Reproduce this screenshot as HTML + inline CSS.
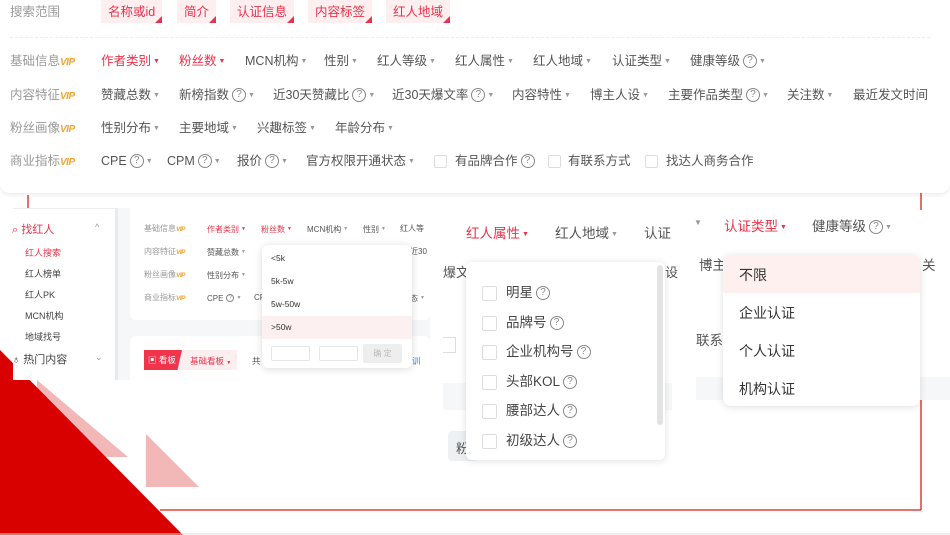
<!DOCTYPE html>
<html><head><meta charset="utf-8">
<style>
*{margin:0;padding:0;box-sizing:border-box}
body{width:950px;height:535px;overflow:hidden;background:#fff;font-family:"Liberation Sans","Noto Sans CJK SC",sans-serif;position:relative;color:#555}
.a{position:absolute;white-space:nowrap}
.t{font-size:12.5px;color:#555;line-height:20px}
.g{color:#999}
.r{color:#e8334a}
.v{font-style:italic;font-weight:bold;font-size:10px;color:#f3a532;letter-spacing:-.5px}
.tag{position:absolute;top:0;height:23px;background:#fdeef0;color:#e8334a;font-size:12.5px;line-height:24px;padding:0 7px}
.tag:after{content:"";position:absolute;right:0;bottom:0;border-left:7px solid transparent;border-bottom:7px solid #e8334a}
.ar{font-size:7px;color:#999;vertical-align:2px;margin-left:2px}
.r .ar{color:#e8334a}
.q{display:inline-block;width:14px;height:14px;border:1px solid #888;border-radius:50%;font-size:10px;line-height:12px;text-align:center;color:#888;margin-left:3px;vertical-align:top;margin-top:3px}
.cb{position:absolute;width:13px;height:13px;border:1px solid #ddd;border-radius:2px;background:#fff}
.s{font-size:8px;line-height:12px}
.s .ar{font-size:5px}
.s .v{font-size:6.5px}
.s .q{width:8px;height:8px;font-size:6px;line-height:7px;margin-top:2px}
</style></head><body>
<svg class="a" style="left:0;top:0" width="950" height="535">
<polygon points="37,380 128,457 37,457" fill="#f2b8b8"/>
<polygon points="146,434 199,487 146,487" fill="#f2b8b8"/>
<polygon points="0,350 183,535 0,535" fill="#d90000"/>
<line x1="921" y1="192" x2="921" y2="510" stroke="#d81f1f" stroke-width="1.3"/>
<line x1="160" y1="510" x2="921" y2="510" stroke="#d81f1f" stroke-width="1.3"/>
<line x1="28" y1="195" x2="28" y2="208" stroke="#d81f1f" stroke-width="1.3"/>
<line x1="0" y1="534" x2="950" y2="534" stroke="#ddd"/>
</svg>

<div class="a" style="left:0;top:0;width:950px;height:193px;background:#fff;border-radius:0 0 10px 10px;box-shadow:0 2px 4px rgba(0,0,0,.08)"></div>
<div class="a t g" style="left:10px;top:2px">搜索范围</div>
<div class="tag" style="left:101px">名称或id</div>
<div class="tag" style="left:177px">简介</div>
<div class="tag" style="left:230px">认证信息</div>
<div class="tag" style="left:308px">内容标签</div>
<div class="tag" style="left:386px">红人地域</div>
<div class="a" style="left:10px;top:37px;width:920px;border-top:1px dashed #eee"></div>

<div class="a t g" style="left:10px;top:51px">基础信息<span class="v">VIP</span></div>
<div class="a t r" style="left:101px;top:51px">作者类别<span class="ar">▼</span></div>
<div class="a t r" style="left:179px;top:51px">粉丝数<span class="ar">▼</span></div>
<div class="a t" style="left:245px;top:51px">MCN机构<span class="ar">▼</span></div>
<div class="a t" style="left:324px;top:51px">性别<span class="ar">▼</span></div>
<div class="a t" style="left:377px;top:51px">红人等级<span class="ar">▼</span></div>
<div class="a t" style="left:455px;top:51px">红人属性<span class="ar">▼</span></div>
<div class="a t" style="left:533px;top:51px">红人地域<span class="ar">▼</span></div>
<div class="a t" style="left:612px;top:51px">认证类型<span class="ar">▼</span></div>
<div class="a t" style="left:690px;top:51px">健康等级<span class="q">?</span><span class="ar">▼</span></div>

<div class="a t g" style="left:10px;top:85px">内容特征<span class="v">VIP</span></div>
<div class="a t" style="left:101px;top:85px">赞藏总数<span class="ar">▼</span></div>
<div class="a t" style="left:179px;top:85px">新榜指数<span class="q">?</span><span class="ar">▼</span></div>
<div class="a t" style="left:273px;top:85px">近30天赞藏比<span class="q">?</span><span class="ar">▼</span></div>
<div class="a t" style="left:392px;top:85px">近30天爆文率<span class="q">?</span><span class="ar">▼</span></div>
<div class="a t" style="left:512px;top:85px">内容特性<span class="ar">▼</span></div>
<div class="a t" style="left:590px;top:85px">博主人设<span class="ar">▼</span></div>
<div class="a t" style="left:668px;top:85px">主要作品类型<span class="q">?</span><span class="ar">▼</span></div>
<div class="a t" style="left:787px;top:85px">关注数<span class="ar">▼</span></div>
<div class="a t" style="left:853px;top:85px">最近发文时间</div>

<div class="a t g" style="left:10px;top:118px">粉丝画像<span class="v">VIP</span></div>
<div class="a t" style="left:101px;top:118px">性别分布<span class="ar">▼</span></div>
<div class="a t" style="left:179px;top:118px">主要地域<span class="ar">▼</span></div>
<div class="a t" style="left:257px;top:118px">兴趣标签<span class="ar">▼</span></div>
<div class="a t" style="left:335px;top:118px">年龄分布<span class="ar">▼</span></div>

<div class="a t g" style="left:10px;top:151px">商业指标<span class="v">VIP</span></div>
<div class="a t" style="left:101px;top:151px">CPE<span class="q">?</span><span class="ar">▼</span></div>
<div class="a t" style="left:167px;top:151px">CPM<span class="q">?</span><span class="ar">▼</span></div>
<div class="a t" style="left:237px;top:151px">报价<span class="q">?</span><span class="ar">▼</span></div>
<div class="a t" style="left:306px;top:151px">官方权限开通状态<span class="ar">▼</span></div>
<div class="cb" style="left:434px;top:155px"></div>
<div class="a t" style="left:455px;top:151px">有品牌合作<span class="q">?</span></div>
<div class="cb" style="left:548px;top:155px"></div>
<div class="a t" style="left:568px;top:151px">有联系方式</div>
<div class="cb" style="left:645px;top:155px"></div>
<div class="a t" style="left:666px;top:151px">找达人商务合作</div>

<div class="a" style="left:13px;top:208px;width:102px;height:172px;background:#fff;border-top:1px solid #eee"></div>
<div class="a" style="left:115px;top:208px;width:3px;height:172px;background:#e8ebee"></div>
<div class="a" style="left:118px;top:208px;width:312px;height:172px;background:#f5f7f9"></div>
<div class="a" style="left:130px;top:208px;width:300px;height:112px;background:#fff;border-radius:0 0 6px 6px"></div>
<div class="a" style="left:130px;top:336px;width:300px;height:44px;background:#fff;border-radius:6px 6px 0 0"></div>
<div class="a r" style="left:12px;top:221px;font-size:11px">⌕ 找红人</div>
<div class="a g" style="left:95px;top:222px;font-size:9px">^</div>
<div class="a r" style="left:25px;top:246px;font-size:9px">红人搜索</div>
<div class="a" style="left:25px;top:267px;font-size:9px;color:#444">红人榜单</div>
<div class="a" style="left:25px;top:288px;font-size:9px;color:#444">红人PK</div>
<div class="a" style="left:25px;top:309px;font-size:9px;color:#444">MCN机构</div>
<div class="a" style="left:25px;top:330px;font-size:9px;color:#444">地域找号</div>
<div class="a" style="left:12px;top:351px;font-size:11px;color:#444">♁ 热门内容</div>
<div class="a g" style="left:95px;top:352px;font-size:9px">⌄</div>

<div class="a s g" style="left:144px;top:223px">基础信息<span class="v">VIP</span></div>
<div class="a s r" style="left:207px;top:223px">作者类别<span class="ar">▼</span></div>
<div class="a s r" style="left:261px;top:223px">粉丝数<span class="ar">▼</span></div>
<div class="a s" style="left:307px;top:223px">MCN机构<span class="ar">▼</span></div>
<div class="a s" style="left:363px;top:223px">性别<span class="ar">▼</span></div>
<div class="a s" style="left:400px;top:223px">红人等</div>
<div class="a s g" style="left:144px;top:246px">内容特征<span class="v">VIP</span></div>
<div class="a s" style="left:207px;top:246px">赞藏总数<span class="ar">▼</span></div>
<div class="a s" style="left:410px;top:246px">近30</div>
<div class="a s g" style="left:144px;top:269px">粉丝画像<span class="v">VIP</span></div>
<div class="a s" style="left:207px;top:269px">性别分布<span class="ar">▼</span></div>
<div class="a s g" style="left:144px;top:292px">商业指标<span class="v">VIP</span></div>
<div class="a s" style="left:207px;top:292px">CPE<span class="q">?</span><span class="ar">▼</span></div>
<div class="a s" style="left:254px;top:292px">CP</div>
<div class="a s" style="left:410px;top:292px">态<span class="ar">▼</span></div>
<div class="a" style="left:144px;top:350px;width:93px;height:20px;background:#fdeef0"></div>
<div class="a" style="left:144px;top:350px;width:38px;height:20px;background:#f0344c;color:#fff;font-size:8.5px;line-height:20px;padding-left:4px;clip-path:polygon(0 0,100% 0,88% 100%,0 100%)">▣ 看板</div>
<div class="a r" style="left:190px;top:355px;font-size:8.5px">基础看板 <span style="font-size:5px">▼</span></div>
<div class="a" style="left:252px;top:355px;font-size:8.5px">共</div>
<div class="a" style="left:412px;top:355px;font-size:8.5px;color:#4a7fe0">训</div>

<div class="a" style="left:262px;top:245px;width:150px;height:123px;background:#fff;border-radius:6px;box-shadow:0 1px 8px rgba(0,0,0,.15)"></div>
<div class="a" style="left:271px;top:253px;font-size:8.5px;color:#333">&lt;5k</div>
<div class="a" style="left:271px;top:276px;font-size:8.5px;color:#333">5k-5w</div>
<div class="a" style="left:271px;top:299px;font-size:8.5px;color:#333">5w-50w</div>
<div class="a" style="left:262px;top:316px;width:150px;height:23px;background:#fdf0f0"></div>
<div class="a" style="left:271px;top:322px;font-size:8.5px;color:#333">&gt;50w</div>
<div class="a" style="left:271px;top:346px;width:39px;height:15px;border:1px solid #e5e5e5;border-radius:2px"></div>
<div class="a" style="left:319px;top:346px;width:39px;height:15px;border:1px solid #e5e5e5;border-radius:2px"></div>
<div class="a" style="left:363px;top:344px;width:39px;height:19px;background:#eee;border-radius:2px;color:#bbb;font-size:8px;text-align:center;line-height:19px">确 定</div>

<div class="a" style="left:443px;top:210px;width:229px;height:255px;background:#fff"></div>
<div class="a" style="left:443px;top:383px;width:229px;height:82px;background:#f5f7f9"></div>
<div class="a" style="left:443px;top:410px;width:229px;height:55px;background:#fff"></div>
<div class="a" style="left:448px;top:431px;width:30px;height:30px;background:#eef1f3;border-radius:4px"></div>
<div class="a" style="left:456px;top:438px;font-size:13px">粉</div>
<div class="a" style="left:443px;top:337px;width:13px;height:16px;border:1px solid #ddd;border-left:none"></div>
<div class="a t r" style="left:466px;top:224px;font-size:13.5px">红人属性<span class="ar">▼</span></div>
<div class="a t" style="left:555px;top:224px;font-size:13.5px">红人地域<span class="ar">▼</span></div>
<div class="a t" style="left:644px;top:224px;font-size:13.5px">认证</div>
<div class="a t" style="left:443px;top:263px;font-size:13px">爆文</div>
<div class="a t" style="left:665px;top:263px;font-size:13px">设</div>
<div class="a" style="left:466px;top:262px;width:199px;height:198px;background:#fff;border-radius:6px;box-shadow:0 1px 8px rgba(0,0,0,.13)"></div>
<div class="a" style="left:657px;top:265px;width:6px;height:160px;background:#e3e3e3;border-radius:3px"></div>
<div class="cb" style="left:482px;top:286px;width:15px;height:15px"></div>
<div class="a t" style="left:506px;top:283px;font-size:13.5px;color:#444">明星<span class="q">?</span></div>
<div class="cb" style="left:482px;top:316px;width:15px;height:15px"></div>
<div class="a t" style="left:506px;top:313px;font-size:13.5px;color:#444">品牌号<span class="q">?</span></div>
<div class="cb" style="left:482px;top:345px;width:15px;height:15px"></div>
<div class="a t" style="left:506px;top:342px;font-size:13.5px;color:#444">企业机构号<span class="q">?</span></div>
<div class="cb" style="left:482px;top:375px;width:15px;height:15px"></div>
<div class="a t" style="left:506px;top:372px;font-size:13.5px;color:#444">头部KOL<span class="q">?</span></div>
<div class="cb" style="left:482px;top:404px;width:15px;height:15px"></div>
<div class="a t" style="left:506px;top:401px;font-size:13.5px;color:#444">腰部达人<span class="q">?</span></div>
<div class="cb" style="left:482px;top:434px;width:15px;height:15px"></div>
<div class="a t" style="left:506px;top:431px;font-size:13.5px;color:#444">初级达人<span class="q">?</span></div>

<div class="a" style="left:696px;top:210px;width:254px;height:190px;background:#fff"></div>
<div class="a" style="left:696px;top:377px;width:254px;height:23px;background:#f5f7f9"></div>
<div class="a" style="left:694px;top:218px;font-size:8px;color:#999">▼</div>
<div class="a t r" style="left:724px;top:217px;font-size:13.5px">认证类型<span class="ar">▼</span></div>
<div class="a t" style="left:812px;top:217px;font-size:13.5px">健康等级<span class="q">?</span><span class="ar">▼</span></div>
<div class="a t" style="left:699px;top:256px;font-size:13.5px">博主</div>
<div class="a t" style="left:922px;top:256px;font-size:13.5px">关</div>
<div class="a t" style="left:696px;top:331px;font-size:13.5px">联系方</div>
<div class="a" style="left:723px;top:255px;width:197px;height:151px;background:#fff;border-radius:8px;box-shadow:0 1px 8px rgba(0,0,0,.13);overflow:hidden"><div style="height:38px;background:#fdf0ef"></div></div>
<div class="a" style="left:739px;top:265px;font-size:14px;color:#333">不限</div>
<div class="a" style="left:739px;top:303px;font-size:14px;color:#333">企业认证</div>
<div class="a" style="left:739px;top:341px;font-size:14px;color:#333">个人认证</div>
<div class="a" style="left:739px;top:379px;font-size:14px;color:#333">机构认证</div>
</body></html>
